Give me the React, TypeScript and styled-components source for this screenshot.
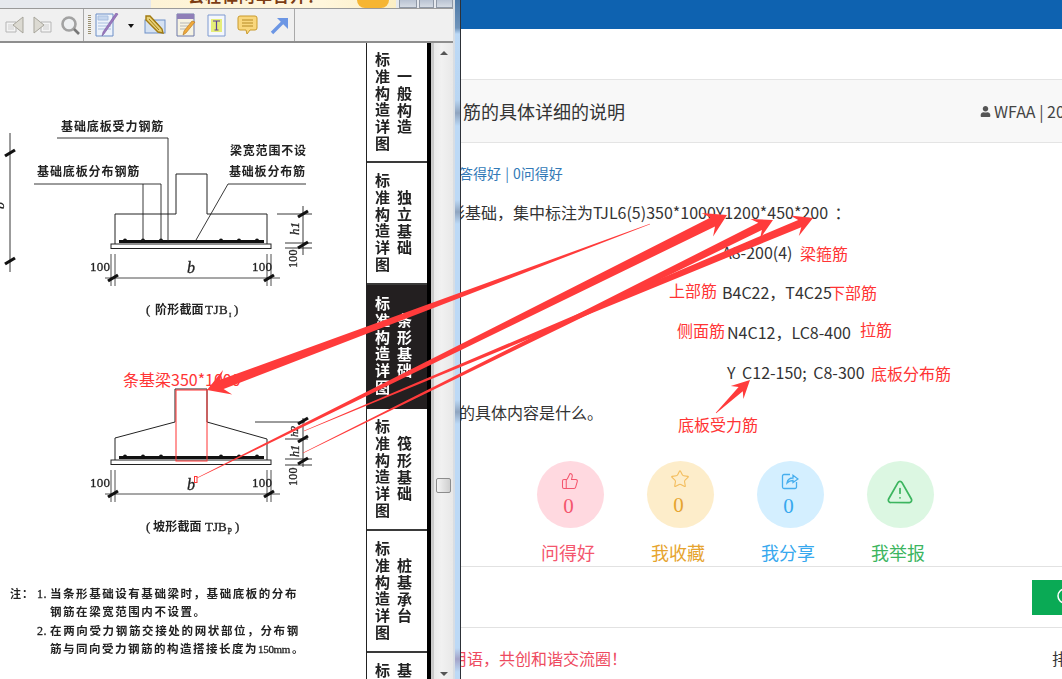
import React from 'react';
import styled, { createGlobalStyle } from 'styled-components';
import { Star, ThumbsUp, TriangleAlert } from 'lucide-react';
import { FaUser } from 'react-icons/fa';

const GlobalStyle = createGlobalStyle`
  html, body {
    margin: 0;
    padding: 0;
    background: #fff;
  }
`;

const CJK = `"Noto Sans CJK SC", "Liberation Sans", sans-serif`;

const Root = styled.div`
  position: relative;
  width: 1062px;
  height: 679px;
  overflow: hidden;
  display: flex;
  font-family: ${CJK};
  color: #333;
`;

/* ---------- pdf viewer window ---------- */

const Viewer = styled.div`
  width: 453px;
  flex-shrink: 0;
  display: flex;
  flex-direction: column;
  background: #f0f0f0;
`;

const TitleStrip = styled.div`
  height: 8px;
  display: flex;
  background: #e6e9ee;
  border-bottom: 1px solid #9a9a9a;
  overflow: hidden;
`;

const AdBanner = styled.div`
  margin-left: 151px;
  width: 246px;
  display: flex;
  background: linear-gradient(90deg, #fdf3d6, #fff6dc 70%, #fbeec5);
  overflow: hidden;
`;

const AdText = styled.span`
  margin: -15px 0 0 37px;
  font-size: 16px;
  line-height: 20px;
  font-weight: 700;
  color: #7c3c14;
  letter-spacing: 1px;
  white-space: nowrap;
`;

const AdBlob = styled.i`
  width: 32px;
  height: 8px;
  margin-left: 33px;
  background: #f6b532;
  border-radius: 0 0 16px 16px;
`;

const WinButtons = styled.div`
  margin-left: 3px;
  display: flex;
  gap: 2px;
`;

const WinButton = styled.i<{ $w: number }>`
  width: ${p => p.$w}px;
  height: 8px;
  background: linear-gradient(180deg, #b9c3d2, #d5dbe4);
  border: 1px solid #8f98a6;
  border-top: 0;
  box-sizing: border-box;
`;

const Toolbar = styled.div`
  height: 32px;
  display: flex;
  align-items: center;
  background: #f0f0f0;
  border-bottom: 2px solid #8e8e8e;
`;

const ToolSep = styled.i<{ $left: number }>`
  width: 1px;
  height: 32px;
  margin-left: ${p => p.$left}px;
  background: #a9a9a9;
`;

const Grip = styled.i`
  width: 3px;
  height: 20px;
  margin-left: 4px;
  background: repeating-linear-gradient(180deg, #9a9070 0 1px, transparent 1px 2px);
`;

const ToolSlot = styled.span<{ $left: number }>`
  display: flex;
  margin-left: ${p => p.$left}px;
`;

const Caret = styled.i`
  margin-left: 9px;
  width: 0;
  height: 0;
  border: 3px solid transparent;
  border-top: 4px solid #111;
  margin-top: 4px;
`;

const DocArea = styled.div`
  flex: 1;
  min-height: 0;
  display: flex;
  background: #fff;
  overflow: hidden;
`;

const Sheet = styled.svg`
  width: 366px;
  height: 637px;
  flex-shrink: 0;
  display: block;
  filter: blur(0.35px);
`;

const TabRail = styled.div`
  width: 60px;
  flex-shrink: 0;
  border-left: 1px solid #222;
  border-right: 4px solid #000;
  overflow: hidden;
  display: flex;
  flex-direction: column;
`;

const Tab = styled.div<{ $h: number; $dark?: boolean }>`
  height: ${p => p.$h}px;
  flex-shrink: 0;
  box-sizing: border-box;
  display: flex;
  align-items: center;
  gap: 7px;
  padding-left: 8px;
  background: ${p => (p.$dark ? '#231f20' : '#fff')};
  color: ${p => (p.$dark ? '#fff' : '#222')};
  border-bottom: 2px solid ${p => (p.$dark ? '#231f20' : '#3a3a3a')};
`;

const TabColumn = styled.span`
  writing-mode: vertical-rl;
  text-orientation: upright;
  font-size: 15px;
  font-weight: 700;
  line-height: 15px;
  letter-spacing: 1.7px;
  filter: blur(0.3px);
`;

const Scroller = styled.div`
  width: 22px;
  flex-shrink: 0;
  box-sizing: border-box;
  border-left: 3px solid #c9c9c9;
  background: linear-gradient(90deg, #e9e9e9, #f1f1f1 40%, #e8e8e8);
  display: flex;
  flex-direction: column;
  align-items: center;
  padding: 8px 0 3px;
`;

const ScrollArrow = styled.i<{ $down?: boolean }>`
  width: 0;
  height: 0;
  border: 4px solid transparent;
  ${p => (p.$down
    ? 'margin-top: auto; border-top: 4px solid #555; border-bottom: 0;'
    : 'border-bottom: 4px solid #555; border-top: 0;')}
`;

const ScrollThumb = styled.i`
  width: 13px;
  height: 13px;
  margin-top: 423px;
  border: 1px solid #8c8c8c;
  border-radius: 2px;
  background: linear-gradient(90deg, #f4f4f4, #cfcfcf);
`;

const WindowEdge = styled.div`
  width: 8px;
  flex-shrink: 0;
  box-sizing: border-box;
  border-left: 2px solid #d8dde3;
  border-right: 1px solid #2d3138;
  background: linear-gradient(
    180deg,
    #4f7ba9 0,
    #6f94bb 28px,
    #bcd9f6 34px,
    #b9d6f3 100px,
    #8fa4bf 113px,
    #bcd9f6 126px,
    #bcd9f6 200px,
    #8fa4bf 212px,
    #bcd9f6 224px,
    #bcd9f6 400px,
    #8fa4bf 412px,
    #bcd9f6 424px,
    #bcd9f6 648px,
    #a3a3c8 659px,
    #bcd9f6 672px
  );
`;

/* ---------- web page behind ---------- */

const Page = styled.div`
  flex: 1;
  min-width: 0;
  overflow: hidden;
  background: #fff;
  display: flex;
  flex-direction: column;
`;

const BlueBar = styled.div`
  height: 29px;
  flex-shrink: 0;
  background: #0e62b0;
`;

const TitleBand = styled.div`
  height: 62px;
  margin-top: 50px;
  flex-shrink: 0;
  display: flex;
  align-items: center;
  background: #f8f8f8;
  border-top: 1px solid #e4e4e4;
  border-bottom: 1px solid #e4e4e4;
`;

const PageTitle = styled.h1`
  width: 517px;
  flex-shrink: 0;
  margin: 0 0 0 2px;
  font-size: 18px;
  font-weight: 400;
  color: #333;
  white-space: nowrap;
`;

const Meta = styled.div`
  display: flex;
  align-items: center;
  gap: 3px;
  font-size: 16px;
  color: #444;
  white-space: nowrap;
`;

const StatLine = styled.div`
  margin: 20px 0 9px -2px;
  font-size: 14px;
  line-height: 20px;
  word-spacing: 1px;
  color: #337ab7;
  white-space: nowrap;
`;

const BodyLine = styled.p<{ $indent: number }>`
  margin: 0 0 0 ${p => p.$indent}px;
  font-size: 16px;
  line-height: 40px;
  word-spacing: 3px;
  color: #333;
  white-space: pre;
`;

const ActionRow = styled.div`
  display: flex;
  margin: 29px 0 0 54px;
`;

const Action = styled.div<{ $text: string }>`
  width: 110px;
  display: flex;
  flex-direction: column;
  align-items: center;
  gap: 12px;
  color: ${p => p.$text};
`;

const ActionCircle = styled.div<{ $bg: string; $top: number }>`
  width: 67px;
  height: 67px;
  box-sizing: border-box;
  padding-top: ${p => p.$top}px;
  border-radius: 50%;
  background: ${p => p.$bg};
  display: flex;
  flex-direction: column;
  align-items: center;
`;

const ActionCount = styled.span`
  margin: 3px 3px 0 0;
  font-family: "Liberation Serif", serif;
  font-size: 21px;
  line-height: 26px;
`;

const ActionLabel = styled.span`
  padding-right: 4px;
  font-size: 18px;
  line-height: 24px;
`;

const ShareRow = styled.div`
  height: 60px;
  margin-top: 2px;
  flex-shrink: 0;
  display: flex;
  align-items: center;
  border-top: 1px solid #e2e2e2;
  border-bottom: 1px solid #e2e2e2;
`;

const WechatButton = styled.div`
  width: 100px;
  height: 35px;
  margin-left: 571px;
  flex-shrink: 0;
  display: flex;
  align-items: center;
  padding-left: 24px;
  box-sizing: border-box;
  background: #0aaa55;
`;

const FootRow = styled.div`
  display: flex;
  align-items: center;
  padding-top: 20px;
  font-size: 16px;
  line-height: 20px;
  white-space: nowrap;
`;

const FootSlogan = styled.span`
  width: 601px;
  flex-shrink: 0;
  margin-left: -10px;
  color: #ee4a60;
`;

const FootSort = styled.span`
  color: #333;
`;

/* ---------- what was marked on the screenshot ---------- */

const Note = styled.span<{ $x: number; $y: number }>`
  position: absolute;
  left: ${p => p.$x}px;
  top: ${p => p.$y}px;
  font-size: 16px;
  line-height: 22px;
  color: #ff3434;
  white-space: nowrap;
`;

const Marks = styled.svg`
  position: absolute;
  left: 0;
  top: 0;
  width: 1062px;
  height: 679px;
  pointer-events: none;
`;

const notes = [
  { x: 123, y: 368, text: '条基梁350*1000' },
  { x: 800, y: 242, text: '梁箍筋' },
  { x: 669, y: 279, text: '上部筋' },
  { x: 829, y: 281, text: '下部筋' },
  { x: 677, y: 319, text: '侧面筋' },
  { x: 860, y: 318, text: '拉筋' },
  { x: 871, y: 362, text: '底板分布筋' },
  { x: 678, y: 413, text: '底板受力筋' },
];

type Arrow = { from: [number, number]; to: [number, number]; neck: number; len: number; barb: number };

const arrows: Arrow[] = [
  { from: [650, 224], to: [207, 390], neck: 10, len: 22, barb: 13 },
  { from: [197, 478], to: [727, 215], neck: 10, len: 22, barb: 13 },
  { from: [303, 453], to: [773, 220], neck: 8, len: 20, barb: 11 },
  { from: [304, 431], to: [813, 218], neck: 8, len: 20, barb: 11 },
  { from: [716, 413], to: [750, 380], neck: 6, len: 18, barb: 9 },
];

// tapered arrow, hair thin at the tail
const arrowPoints = ({ from, to, neck, len, barb }: Arrow) => {
  const dx = to[0] - from[0];
  const dy = to[1] - from[1];
  const l = Math.hypot(dx, dy);
  const ux = dx / l;
  const uy = dy / l;
  const nx = -uy;
  const ny = ux;
  const at = (back: number, side: number) =>
    `${(to[0] - ux * back + nx * side).toFixed(1)},${(to[1] - uy * back + ny * side).toFixed(1)}`;
  return [
    at(l, 0.3),
    at(len * 0.72, neck / 2),
    at(len, barb),
    at(0, 0),
    at(len, -barb),
    at(len * 0.72, -neck / 2),
    at(l, -0.3),
  ].join(' ');
};

/* ---------- drawing on the scanned sheet ---------- */

const ScanText = ({ x, y, size = 12, gap = 0.9, serif, children, rotate, italic }: {
  x: number;
  y: number;
  size?: number;
  gap?: number;
  serif?: boolean;
  rotate?: number;
  italic?: boolean;
  children: React.ReactNode;
}) => (
  <text
    x={x}
    y={y}
    fontSize={size}
    letterSpacing={gap}
    fontFamily={serif ? '"Liberation Serif", serif' : CJK}
    fontWeight={serif ? 400 : 700}
    fontStyle={italic ? 'italic' : undefined}
    fill="#222"
    stroke={serif ? '#222' : undefined}
    strokeWidth={serif ? 0.3 : undefined}
    transform={rotate ? `rotate(${rotate} ${x} ${y})` : undefined}
  >
    {children}
  </text>
);

const Tick = ({ x, y }: { x: number; y: number }) => (
  <path d={`M${x - 5} ${y + 3}L${x + 5} ${y - 3}`} stroke="#111" strokeWidth="3.2" />
);

const Footing = ({ top, sloped }: { top: number; sloped: boolean }) => {
  // top is the y of the upper edge of the pad
  const rebar = top - 2.5;
  const outline = sloped
    ? `M115 ${top}V${top - 22}L175 ${top - 38}V${top - 71}H207V${top - 38}L267 ${top - 21}V${top}`
    : `M115 ${top}V${top - 30}H176V${top - 70}H207V${top - 30}H267V${top}`;
  const dim = top + 34;
  return (
    <g fill="none" stroke="#222" strokeWidth="1">
      <path d={outline} />
      <rect x="111" y={top} width="160" height="4.5" />
      <path d={`M119 ${rebar}H264`} stroke="#111" strokeWidth="3" />
      {[125, 143, 161, 221, 239, 257].map(x => (
        <circle key={x} cx={x} cy={rebar - 1} r="2" fill="#111" stroke="none" />
      ))}
      <path d={`M105 ${dim}H280M111 ${top + 10}V${dim + 8}M115 ${top + 10}V${dim + 8}M267 ${top + 10}V${dim + 8}M271 ${top + 10}V${dim + 8}`} strokeWidth="0.8" />
      <Tick x={113} y={dim} />
      <Tick x={269} y={dim} />
    </g>
  );
};

const Drawing = () => (
  <Sheet viewBox="0 42 366 637">
    {/* stepped section */}
    <Footing top={243} sloped={false} />
    <g fill="none" stroke="#222" strokeWidth="0.9">
      <path d="M57 137H168V240" />
      <path d="M34 183H161V240M143 183V240" />
      <path d="M306 183H228L196 239" />
      <path d="M10 132V271" />
      <path d="M277 213H312M285 242H312M285 247H312M303 205V254" />
    </g>
    <Tick x={10} y={152} />
    <Tick x={10} y={260} />
    <Tick x={303} y={213} />
    <Tick x={303} y={244} />
    <ScanText x={61} y={130}>基础底板受力钢筋</ScanText>
    <ScanText x={37} y={175}>基础底板分布钢筋</ScanText>
    <ScanText x={230} y={154} gap={0.8}>梁宽范围不设</ScanText>
    <ScanText x={229} y={175} gap={0.8}>基础板分布筋</ScanText>
    <ScanText x={90} y={270} size={13} gap={0.2} serif>100</ScanText>
    <ScanText x={252} y={270} size={13} gap={0.2} serif>100</ScanText>
    <ScanText x={187} y={272} size={16} gap={0} serif italic>b</ScanText>
    <ScanText x={4} y={208} size={14} gap={0} serif italic rotate={-90}>b</ScanText>
    <ScanText x={299} y={234} size={13} gap={0} serif italic rotate={-90}>h1</ScanText>
    <ScanText x={297} y={267} size={12} gap={0.2} serif rotate={-90}>100</ScanText>
    <ScanText x={146} y={313} size={13} gap={0} serif>(</ScanText>
    <ScanText x={155} y={313} gap={0.2}>阶形截面</ScanText>
    <ScanText x={205} y={313} size={13} gap={0.5} serif>TJB</ScanText>
    <ScanText x={229} y={316} size={7} gap={0} serif>I</ScanText>
    <ScanText x={234} y={313} size={13} gap={0} serif>)</ScanText>

    {/* sloped section */}
    <Footing top={459} sloped />
    <g fill="none" stroke="#222" strokeWidth="0.9">
      <path d="M255 421H305M285 438H308M285 458H312M285 464H312M303 417V466" />
    </g>
    <Tick x={303} y={420} />
    <Tick x={303} y={438} />
    <Tick x={303} y={460} />
    <ScanText x={90} y={486} size={13} gap={0.2} serif>100</ScanText>
    <ScanText x={252} y={486} size={13} gap={0.2} serif>100</ScanText>
    <ScanText x={187} y={489} size={16} gap={0} serif italic>b</ScanText>
    <ScanText x={298} y={436} size={11} gap={0} serif italic rotate={-90}>h2</ScanText>
    <ScanText x={299} y={456} size={12} gap={0} serif italic rotate={-90}>h1</ScanText>
    <ScanText x={297} y={485} size={12} gap={0.2} serif rotate={-90}>100</ScanText>
    <ScanText x={146} y={530} size={13} gap={0} serif>(</ScanText>
    <ScanText x={153} y={530} gap={0.2}>坡形截面</ScanText>
    <ScanText x={205} y={530} size={13} gap={0} serif>TJB</ScanText>
    <ScanText x={227.500} y={533} size={8} gap={0} serif>P</ScanText>
    <ScanText x={235} y={530} size={13} gap={0} serif>)</ScanText>

    {/* notes */}
    <ScanText x={10} y={597} size={11} gap={1}>注：</ScanText>
    <ScanText x={37} y={597} size={12} gap={0.5} serif>1.</ScanText>
    <ScanText x={50} y={597} size={11.5} gap={1.55}>当条形基础设有基础梁时，基础底板的分布</ScanText>
    <ScanText x={50} y={615} size={11.5} gap={1.55}>钢筋在梁宽范围内不设置。</ScanText>
    <ScanText x={37} y={634} size={12} gap={0.5} serif>2.</ScanText>
    <ScanText x={50} y={634} size={11.5} gap={1.65}>在两向受力钢筋交接处的网状部位，分布钢</ScanText>
    <ScanText x={50} y={652} size={11.5} gap={1.5}>筋与同向受力钢筋的构造搭接长度为</ScanText>
    <ScanText x={258} y={652} size={11} gap={-0.3} serif>150mm</ScanText>
    <ScanText x={292} y={652} size={11.5} gap={0}>。</ScanText>
  </Sheet>
);

const DocIcon = ({ mirror }: { mirror?: boolean }) => (
  <svg width="20" height="20" viewBox="0 0 20 20" style={mirror ? { transform: 'scaleX(-1)' } : undefined}>
    <path d="M1 7h10v10H1z" fill="#f4f4f4" stroke="#b5b5b5" />
    <path d="M3 10h6M3 12h6M3 14h6" stroke="#cfcfcf" />
    <path d="M18 2v16L8 10z" fill="#dcdad2" stroke="#a7a59b" />
  </svg>
);

const ToolIcon = ({ name }: { name: string }) => {
  switch (name) {
    case 'zoom':
      return (
        <svg width="21" height="21" viewBox="0 0 21 21">
          <circle cx="9" cy="9" r="6.5" fill="#eef0f2" stroke="#a2a2a2" strokeWidth="2.6" />
          <path d="M14 14l5 5" stroke="#777" strokeWidth="2.6" />
        </svg>
      );
    case 'edit':
      return (
        <svg width="24" height="24" viewBox="0 0 24 24">
          <path d="M1 1h17v22H1z" fill="#edf3fb" stroke="#6d8fc7" />
          <path d="M3 3h10v4H3zM3 10h13M3 13h13M3 16h13" fill="#c5d6ee" stroke="#a9bfdf" />
          <path d="M23 1L9 21l-2 2 1-4L21 0z" fill="#9a78bf" stroke="#7a5a9d" strokeWidth=".6" />
        </svg>
      );
    case 'sign':
      return (
        <svg width="22" height="20" viewBox="0 0 22 20">
          <rect x="1" y="5" width="20" height="13" fill="#d5e2f2" stroke="#6d8fc7" />
          <path d="M2 1l4 0 12 13 1 4-5-1L2 5z" fill="#e7d179" stroke="#a17a10" strokeWidth="1.4" />
          <path d="M5 4l10 11M8 3l9 10" stroke="#a17a10" />
        </svg>
      );
    case 'note':
      return (
        <svg width="20" height="24" viewBox="0 0 20 24">
          <path d="M1 1h17v22H1z" fill="#f6f3e2" stroke="#6d78a8" />
          <path d="M1 1h17v5H1z" fill="#8f7fb8" />
          <path d="M4 10h11M4 13h8M4 16h6" stroke="#b7b7b7" />
          <path d="M19 9L10 20l-3 2 1-4 8-10z" fill="#f0a93a" stroke="#b4741a" strokeWidth=".6" />
        </svg>
      );
    case 'text':
      return (
        <svg width="19" height="23" viewBox="0 0 19 23">
          <path d="M1 1h17v21H1z" fill="#f4f7fc" stroke="#7f9ad0" />
          <rect x="4" y="5" width="11" height="13" fill="#e6ee7a" />
          <path d="M6 7h7M9.5 7v9M7.5 16h4" stroke="#5b3f96" strokeWidth="1.2" fill="none" />
        </svg>
      );
    case 'comment':
      return (
        <svg width="21" height="20" viewBox="0 0 21 20">
          <path d="M3 1h15a2 2 0 0 1 2 2v10a2 2 0 0 1-2 2h-5l-3 4-1-4H3a2 2 0 0 1-2-2V3a2 2 0 0 1 2-2z" fill="#f9d77d" stroke="#c99a2c" />
          <path d="M5 5h11M5 8h11M5 11h11" stroke="#b58a26" />
        </svg>
      );
    default:
      return (
        <svg width="19" height="19" viewBox="0 0 19 19">
          <path d="M2 17L15 4" stroke="#6c96e4" strokeWidth="3.4" />
          <path d="M7 2h11v11z" fill="#6c96e4" />
        </svg>
      );
  }
};

const ShareIcon = () => (
  <svg width="18" height="18" viewBox="0 0 18 18" fill="none" stroke="#46aeee" strokeWidth="1.3">
    <path d="M9 2.5H3a1.5 1.5 0 0 0-1.5 1.5v11A1.5 1.5 0 0 0 3 16.5h11a1.5 1.5 0 0 0 1.5-1.5v-5" />
    <path d="M6 11c.5-3 3-5 6-5V3.2L17 7l-5 3.5V8.5c-2.5 0-4.500 1-6 2.500z" fill="#d4efff" />
  </svg>
);

const tabs = [
  { h: 120, a: '标准构造详图', b: '一般构造' },
  { h: 122, a: '标准构造详图', b: '独立基础' },
  { h: 124, a: '标准构造详图', b: '条形基础', dark: true },
  { h: 122, a: '标准构造详图', b: '筏形基础' },
  { h: 122, a: '标准构造详图', b: '桩基承台' },
  { h: 122, a: '标准构造详图', b: '基础相关构造' },
];

const actions = [
  { bg: '#ffd9e0', text: '#f4566e', label: '问得好', top: 11, icon: <ThumbsUp size={18} strokeWidth={1.4} />, count: 0 },
  { bg: '#fdedca', text: '#e6a42f', label: '我收藏', top: 8, icon: <Star size={20} strokeWidth={1.3} color="#f3bd5c" />, count: 0 },
  { bg: '#d4efff', text: '#37a8ee', label: '我分享', top: 11, icon: <ShareIcon />, count: 0 },
  { bg: '#dcf7e2', text: '#3cb55f', label: '我举报', top: 17, icon: <TriangleAlert size={28} strokeWidth={1.5} /> },
];

const App = () => (
  <>
    <GlobalStyle />
    <Root>
      <Viewer>
        <TitleStrip>
          <AdBanner>
            <AdText>会程律阿单台开！</AdText>
            <AdBlob />
          </AdBanner>
          <WinButtons>
            <WinButton $w={18} />
            <WinButton $w={15} />
            <WinButton $w={17} />
          </WinButtons>
        </TitleStrip>
        <Toolbar>
          <ToolSlot $left={5}><DocIcon /></ToolSlot>
          <ToolSlot $left={7}><DocIcon mirror /></ToolSlot>
          <ToolSlot $left={8}><ToolIcon name="zoom" /></ToolSlot>
          <ToolSep $left={2} />
          <Grip />
          <ToolSlot $left={4}><ToolIcon name="edit" /></ToolSlot>
          <Caret />
          <ToolSlot $left={10}><ToolIcon name="sign" /></ToolSlot>
          <ToolSlot $left={10}><ToolIcon name="note" /></ToolSlot>
          <ToolSlot $left={11}><ToolIcon name="text" /></ToolSlot>
          <ToolSlot $left={11}><ToolIcon name="comment" /></ToolSlot>
          <ToolSlot $left={12}><ToolIcon name="arrow" /></ToolSlot>
          <ToolSep $left={5} />
        </Toolbar>
        <DocArea>
          <Drawing />
          <TabRail>
            {tabs.map(t => (
              <Tab key={t.b} $h={t.h} $dark={t.dark}>
                <TabColumn>{t.a}</TabColumn>
                <TabColumn>{t.b}</TabColumn>
              </Tab>
            ))}
          </TabRail>
          <Scroller>
            <ScrollArrow />
            <ScrollThumb />
            <ScrollArrow $down />
          </Scroller>
        </DocArea>
      </Viewer>
      <WindowEdge />
      <Page>
        <BlueBar />
        <TitleBand>
          <PageTitle>筋的具体详细的说明</PageTitle>
          <Meta>
            <FaUser size={11} color="#555" />
            <span>WFAA | 2018-08-20</span>
          </Meta>
        </TitleBand>
        <StatLine>答得好 | 0问得好</StatLine>
        <BodyLine $indent={-12}>形基础，集中标注为TJL6(5)350*1000Y1200*450*200 ：</BodyLine>
        <BodyLine $indent={261}>A8-200(4)</BodyLine>
        <BodyLine $indent={261}>B4C22，T4C25</BodyLine>
        <BodyLine $indent={266}>N4C12，LC8-400</BodyLine>
        <BodyLine $indent={266}>Y C12-150; C8-300</BodyLine>
        <BodyLine $indent={-2}>的具体内容是什么。</BodyLine>
        <ActionRow>
          {actions.map(a => (
            <Action key={a.label} $text={a.text}>
              <ActionCircle $bg={a.bg} $top={a.top}>
                {a.icon}
                {a.count !== undefined && <ActionCount>{a.count}</ActionCount>}
              </ActionCircle>
              <ActionLabel>{a.label}</ActionLabel>
            </Action>
          ))}
        </ActionRow>
        <ShareRow>
          <WechatButton>
            <svg width="20" height="20" viewBox="0 0 20 20" fill="none" stroke="#fff" strokeWidth="1.5">
              <circle cx="9" cy="9" r="7" />
            </svg>
          </WechatButton>
        </ShareRow>
        <FootRow>
          <FootSlogan>用语，共创和谐交流圈！</FootSlogan>
          <FootSort>排序</FootSort>
        </FootRow>
      </Page>
      {notes.map(n => (
        <Note key={n.text} $x={n.x} $y={n.y}>{n.text}</Note>
      ))}
      <Marks viewBox="0 0 1062 679">
        <rect x="176" y="390" width="31" height="71" fill="none" stroke="#f33" strokeWidth="1" />
        <rect x="194.500" y="476.500" width="2.500" height="6" fill="none" stroke="#f33" strokeWidth="1" />
        {arrows.map(a => (
          <polygon key={a.to.join()} points={arrowPoints(a)} fill="#ff3b3b" />
        ))}
      </Marks>
    </Root>
  </>
);

export default App;
